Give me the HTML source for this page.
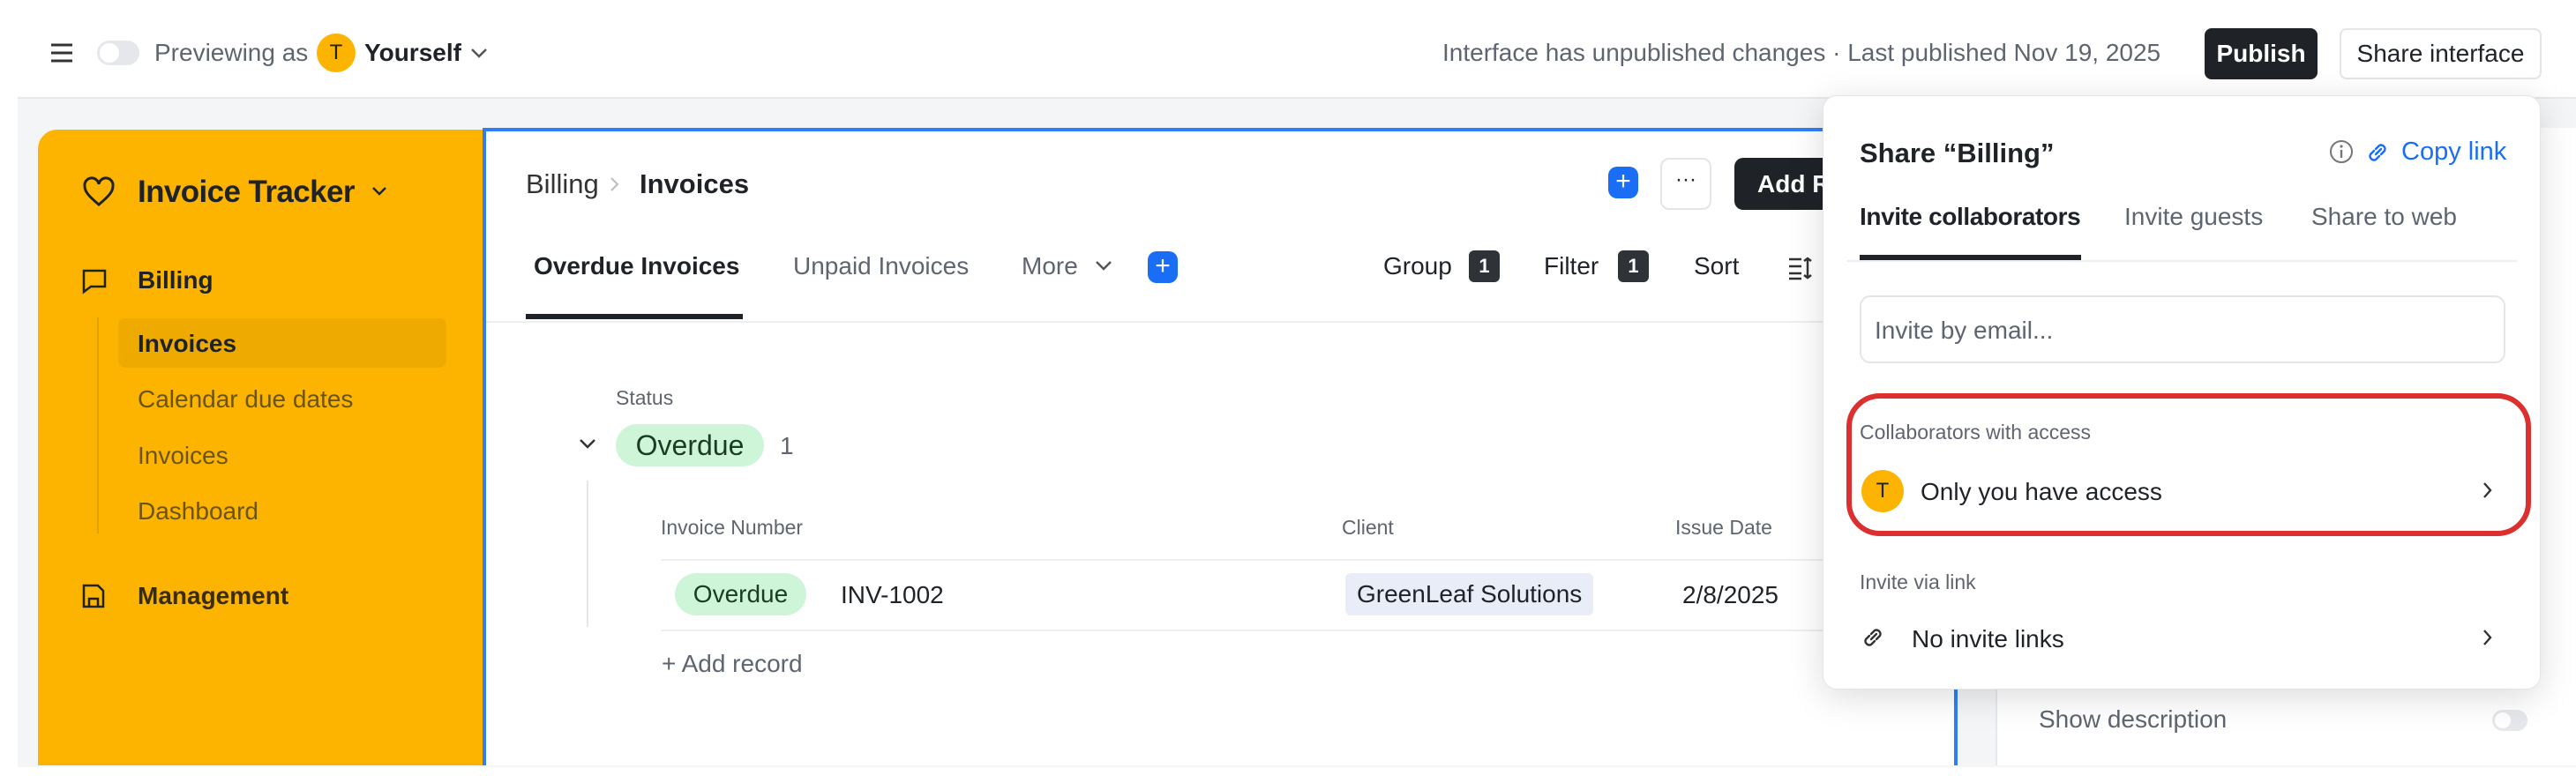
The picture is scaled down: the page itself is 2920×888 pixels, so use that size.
<!DOCTYPE html>
<html><head><meta charset="utf-8"><style>
*{box-sizing:border-box;margin:0;padding:0}
body{width:2920px;height:888px;overflow:hidden;background:#fff;font-family:"Liberation Sans",sans-serif;color:#1f2328;position:relative}
.a{position:absolute;white-space:nowrap}
.g{color:#5f6570}
</style></head><body>
<svg class="a" style="left:56px;top:48px" width="28" height="24" viewBox="0 0 28 24"><path d="M2 3h24M2 12h24M2 21h24" stroke="#333" stroke-width="3"/></svg>
<div class="a" style="left:110px;top:46px;width:48px;height:28px;border-radius:14px;background:#e5e7eb"><div style="position:absolute;left:3px;top:3px;width:22px;height:22px;border-radius:50%;background:#fff"></div></div>
<div class="a g" style="left:175px;top:44px;font-size:28px">Previewing as</div>
<div class="a" style="left:359px;top:38px;width:44px;height:44px;border-radius:50%;background:#fcb400;font-size:24px;text-align:center;line-height:44px">T</div>
<div class="a" style="left:413px;top:44px;font-size:28px;font-weight:bold">Yourself</div>
<svg class="a" style="left:532px;top:52px" width="22" height="16"><path d="M3 4l8 8 8-8" stroke="#555" stroke-width="2.5" fill="none"/></svg>
<div class="a g" style="left:1635px;top:44px;font-size:28px">Interface has unpublished changes · Last published Nov 19, 2025</div>
<div class="a" style="left:2499px;top:32px;width:128px;height:58px;border-radius:8px;background:#1f2328;color:#fff;font-size:28px;font-weight:bold;text-align:center;line-height:58px">Publish</div>
<div class="a" style="left:2652px;top:32px;width:229px;height:58px;border-radius:8px;border:2px solid #e3e5e8;font-size:28px;text-align:center;line-height:54px">Share interface</div>
<div class="a" style="left:20px;top:110px;width:2900px;height:760px;background:#f4f5f7;border-top:2px solid #e6e8eb"></div>
<div class="a" style="left:43px;top:147px;width:506px;height:721px;background:#fcb400;border-radius:22px 0 0 0"></div>
<svg class="a" style="left:92px;top:200px" width="40" height="36" viewBox="0 0 40 36"><path d="M20 32C8 22 4 17 4 11a8 8 0 0116-2 8 8 0 0116 2c0 6-4 11-16 21z" fill="none" stroke="#1f2328" stroke-width="3"/></svg>
<div class="a" style="left:156px;top:198px;font-size:35px;font-weight:bold;letter-spacing:-0.6px">Invoice Tracker</div>
<svg class="a" style="left:420px;top:210px" width="20" height="14"><path d="M3 3l7 7 7-7" stroke="#1f2328" stroke-width="2.5" fill="none"/></svg>
<svg class="a" style="left:92px;top:304px" width="30" height="30"><path d="M3 3h24v18H11l-8 6z" fill="none" stroke="#1f2328" stroke-width="2.5"/></svg>
<div class="a" style="left:156px;top:302px;font-size:28px;font-weight:bold">Billing</div>
<div class="a" style="left:110px;top:360px;width:2px;height:245px;background:#e0a400"></div>
<div class="a" style="left:134px;top:361px;width:372px;height:56px;border-radius:8px;background:#efaa00"></div>
<div class="a" style="left:156px;top:374px;font-size:28px;font-weight:bold">Invoices</div>
<div class="a" style="left:156px;top:437px;font-size:28px;color:#6b5410">Calendar due dates</div>
<div class="a" style="left:156px;top:501px;font-size:28px;color:#6b5410">Invoices</div>
<div class="a" style="left:156px;top:564px;font-size:28px;color:#6b5410">Dashboard</div>
<svg class="a" style="left:92px;top:661px" width="28" height="30"><path d="M3 3h16l6 6v18H3z M9 27v-9h10v9" fill="none" stroke="#1f2328" stroke-width="2.5"/></svg>
<div class="a" style="left:156px;top:660px;font-size:28px;font-weight:bold;color:#3a2d05">Management</div>
<div class="a" style="left:547px;top:145px;width:1672px;height:723px;background:#fff;border-top:4px solid #2d7ff9;border-left:4px solid #2d7ff9;border-right:4px solid #2d7ff9"></div>
<div class="a" style="left:596px;top:191px;font-size:31px;color:#333">Billing</div>
<svg class="a" style="left:690px;top:200px" width="14" height="18"><path d="M3 2l7 7-7 7" stroke="#bbb" stroke-width="2" fill="none"/></svg>
<div class="a" style="left:725px;top:191px;font-size:31px;font-weight:bold">Invoices</div>
<div class="a" style="left:605px;top:286px;font-size:28px;font-weight:bold">Overdue Invoices</div>
<div class="a" style="left:596px;top:356px;width:246px;height:6px;background:#1f2328"></div>
<div class="a" style="left:551px;top:364px;width:1664px;height:2px;background:#eceef1"></div>
<div class="a g" style="left:899px;top:286px;font-size:28px">Unpaid Invoices</div>
<div class="a g" style="left:1158px;top:286px;font-size:28px">More</div>
<svg class="a" style="left:1240px;top:294px" width="22" height="14"><path d="M3 3l8 8 8-8" stroke="#555" stroke-width="2.5" fill="none"/></svg>
<div class="a" style="left:1301px;top:285px;width:34px;height:36px;border-radius:10px;background:#1a6ef5;color:#fff;font-size:30px;text-align:center;line-height:34px">+</div>
<div class="a" style="left:1823px;top:189px;width:34px;height:36px;border-radius:10px;background:#1a6ef5;color:#fff;font-size:30px;text-align:center;line-height:34px">+</div>
<div class="a" style="left:1882px;top:179px;width:58px;height:59px;border-radius:10px;border:2px solid #e3e5e8;text-align:center;font-size:24px;line-height:46px">···</div>
<div class="a" style="left:1966px;top:179px;width:150px;height:59px;border-radius:10px;background:#1f2328;color:#fff;font-size:28px;font-weight:bold;line-height:59px;padding-left:26px">Add Record</div>
<div class="a" style="left:1568px;top:286px;font-size:28px">Group</div>
<div class="a" style="left:1665px;top:284px;width:35px;height:36px;border-radius:6px;background:#2f3338;color:#fff;font-size:22px;font-weight:bold;text-align:center;line-height:36px">1</div>
<div class="a" style="left:1750px;top:286px;font-size:28px">Filter</div>
<div class="a" style="left:1834px;top:284px;width:35px;height:36px;border-radius:6px;background:#2f3338;color:#fff;font-size:22px;font-weight:bold;text-align:center;line-height:36px">1</div>
<div class="a" style="left:1920px;top:286px;font-size:28px">Sort</div>
<svg class="a" style="left:2026px;top:290px" width="30" height="28"><path d="M2 4h14M2 12h14M2 20h14M2 26h14M23 3v22M19 6l4-3 4 3M19 22l4 3 4-3" stroke="#333" stroke-width="2.5" fill="none"/></svg>
<div class="a g" style="left:698px;top:438px;font-size:23px">Status</div>
<svg class="a" style="left:655px;top:496px" width="22" height="16"><path d="M3 3l8 8 8-8" stroke="#333" stroke-width="2.5" fill="none"/></svg>
<div class="a" style="left:698px;top:481px;width:168px;height:48px;border-radius:24px;background:#cff5d8;font-size:32px;text-align:center;line-height:48px;color:#1c3b24">Overdue</div>
<div class="a g" style="left:884px;top:490px;font-size:28px">1</div>
<div class="a" style="left:665px;top:545px;width:2px;height:166px;background:#e4e6e9"></div>
<div class="a g" style="left:749px;top:585px;font-size:23px">Invoice Number</div>
<div class="a g" style="left:1521px;top:585px;font-size:23px">Client</div>
<div class="a g" style="left:1899px;top:585px;font-size:23px">Issue Date</div>
<div class="a" style="left:749px;top:634px;width:1320px;height:2px;background:#eceef1"></div>
<div class="a" style="left:765px;top:650px;width:149px;height:48px;border-radius:24px;background:#cff5d8;font-size:28px;text-align:center;line-height:48px;color:#1c3b24">Overdue</div>
<div class="a" style="left:953px;top:659px;font-size:28px">INV-1002</div>
<div class="a" style="left:1525px;top:650px;width:281px;height:48px;border-radius:6px;background:#e8edf7;font-size:28px;line-height:48px;padding-left:13px">GreenLeaf Solutions</div>
<div class="a" style="left:1907px;top:659px;font-size:28px">2/8/2025</div>
<div class="a" style="left:749px;top:714px;width:1320px;height:2px;background:#eceef1"></div>
<div class="a g" style="left:750px;top:737px;font-size:28px">+ Add record</div>
<div class="a" style="left:2262px;top:145px;width:660px;height:723px;background:#fff;border-left:2px solid #e6e8eb"></div>
<div class="a g" style="left:2311px;top:800px;font-size:28px">Show description</div>
<div class="a" style="left:2825px;top:805px;width:40px;height:24px;border-radius:12px;background:#e5e7eb"><div style="position:absolute;left:3px;top:3px;width:18px;height:18px;border-radius:50%;background:#fff"></div></div>
<div class="a" style="left:2066px;top:108px;width:814px;height:674px;background:#fff;border-radius:16px;border:1px solid #e3e5e8;box-shadow:0 8px 40px rgba(0,0,0,.14)"></div>
<div class="a" style="left:2108px;top:156px;font-size:31px;font-weight:bold">Share “Billing”</div>
<svg class="a" style="left:2640px;top:158px" width="28" height="28"><circle cx="14" cy="14" r="12" fill="none" stroke="#777" stroke-width="2"/><path d="M14 12v9" stroke="#777" stroke-width="2.4"/><circle cx="14" cy="8" r="1.6" fill="#777"/></svg>
<svg class="a" style="left:2680px;top:158px" width="30" height="30" viewBox="0 0 30 30"><path d="M13 17l6-6M11 13l-4 4a4.5 4.5 0 006 6l4-4M19 17l4-4a4.5 4.5 0 00-6-6l-4 4" fill="none" stroke="#1a6ef5" stroke-width="2.4" stroke-linecap="round"/></svg>
<div class="a" style="left:2722px;top:156px;font-size:29px;color:#1a6ef5">Copy link</div>
<div class="a" style="left:2108px;top:230px;font-size:28px;font-weight:bold;letter-spacing:-0.4px">Invite collaborators</div>
<div class="a g" style="left:2408px;top:230px;font-size:28px">Invite guests</div>
<div class="a g" style="left:2620px;top:230px;font-size:28px">Share to web</div>
<div class="a" style="left:2093px;top:295px;width:760px;height:2px;background:#eceef1"></div>
<div class="a" style="left:2108px;top:289px;width:251px;height:6px;background:#1f2328"></div>
<div class="a" style="left:2108px;top:335px;width:732px;height:77px;border-radius:12px;border:2px solid #e3e5e8"></div>
<div class="a g" style="left:2125px;top:359px;font-size:28px">Invite by email...</div>
<div class="a" style="left:2093px;top:446px;width:776px;height:162px;border:6px solid #dc2f2f;border-radius:38px"></div>
<div class="a g" style="left:2108px;top:477px;font-size:23px">Collaborators with access</div>
<div class="a" style="left:2110px;top:533px;width:48px;height:48px;border-radius:50%;background:#fcb400;font-size:24px;text-align:center;line-height:48px">T</div>
<div class="a" style="left:2177px;top:542px;font-size:28px">Only you have access</div>
<svg class="a" style="left:2813px;top:545px" width="14" height="22"><path d="M3 3l7 8-7 8" stroke="#333" stroke-width="2.4" fill="none"/></svg>
<div class="a g" style="left:2108px;top:647px;font-size:23px">Invite via link</div>
<svg class="a" style="left:2108px;top:708px" width="30" height="30" viewBox="0 0 30 30"><path d="M13 17l6-6M11 13l-4 4a4.5 4.5 0 006 6l4-4M19 17l4-4a4.5 4.5 0 00-6-6l-4 4" fill="none" stroke="#333" stroke-width="2.4" stroke-linecap="round"/></svg>
<div class="a" style="left:2167px;top:709px;font-size:28px">No invite links</div>
<svg class="a" style="left:2813px;top:712px" width="14" height="22"><path d="M3 3l7 8-7 8" stroke="#333" stroke-width="2.4" fill="none"/></svg>
</body></html>
